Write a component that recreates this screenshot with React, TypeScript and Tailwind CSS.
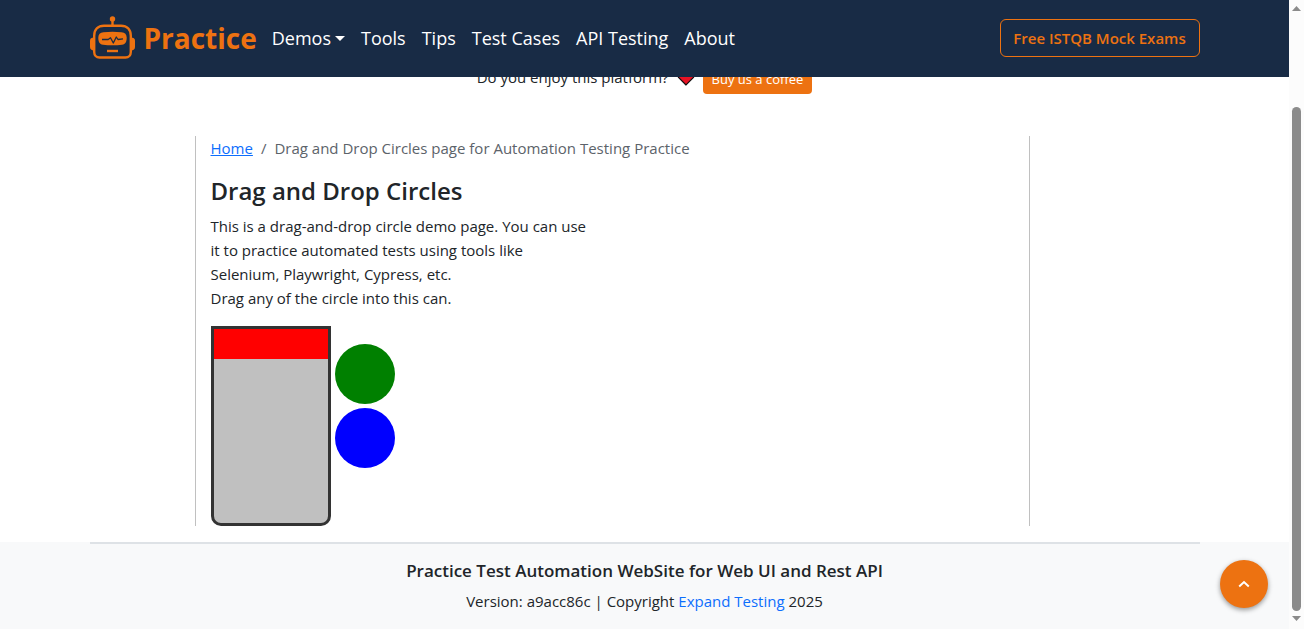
import React from "react";

const navLinks = ["Tools", "Tips", "Test Cases", "API Testing", "About"];

function RobotLogo() {
  return (
    <svg width="45" height="45" viewBox="0 0 45 45" fill="none" aria-hidden="true">
      <circle cx="22.5" cy="3" r="2.7" fill="#ed7211" />
      <path d="M22.5 4v6" stroke="#ed7211" strokeWidth="2.4" />
      <path
        d="M14 9.7H31c6 0 9.8 4 9.8 10V36c0 3-2 5.5-5.3 5.5H9.5C6.2 41.5 4.2 39 4.2 36V19.7c0-6 3.8-10 9.8-10Z"
        stroke="#ed7211"
        strokeWidth="2.4"
      />
      <path d="M4 21.5v13C1.5 34.5 0 33 0 31v-6.5c0-2 1.5-3 4-3Z" fill="#ed7211" />
      <path d="M41 21.5v13c2.5 0 4-1.500 4-3.500v-6.500c0-2-1.500-3-4-3Z" fill="#ed7211" />
      <path
        d="M13.5 16.200c6-.7 12-.7 18 0 3.500.4 5.200 2 5.200 5.300 0 4-1 6.700-4.700 7.200-6 .7-13 .7-19 0-3.700-.5-4.700-3.200-4.700-7.200 0-3.300 1.700-4.900 5.200-5.300Z"
        fill="#ed7211"
      />
      <path
        d="M12 23.500h6.200l2.300-1.700 2.800 5.200 3-6 1.700 2.500 5-.7"
        stroke="#182b45"
        strokeWidth="1.3"
        strokeLinejoin="round"
      />
      <path d="M17 35h11" stroke="#ed7211" strokeWidth="2.4" />
    </svg>
  );
}

function Header() {
  return (
    <header className="relative z-10 h-[77px] shrink-0 bg-[#182b45] pb-px">
      <div className="mx-auto flex h-full max-w-[1110px] items-center">
        <a href="#" className="mr-[15px] flex items-center gap-[9px] text-[28px] leading-10 font-bold text-[#ed7211]">
          <RobotLogo />
          Practice
        </a>
        <nav className="flex items-center gap-4 text-[18px] leading-7 text-white">
          <button type="button" className="flex items-center gap-1">
            Demos
            <svg width="10" height="5" viewBox="0 0 10 5" fill="currentColor" aria-hidden="true">
              <path d="M0 0h10L5 5Z" />
            </svg>
          </button>
          {navLinks.map((label) => (
            <a key={label} href="#">
              {label}
            </a>
          ))}
        </nav>
        <a
          href="#"
          className="ml-auto flex h-[38px] w-[200px] items-center justify-center rounded-md border border-[#ed7211] text-[15px] font-semibold whitespace-nowrap text-[#ed7211]"
        >
          Free ISTQB Mock Exams
        </a>
      </div>
    </header>
  );
}

function Heart() {
  return (
    <svg width="18" height="16" viewBox="0 0 18 16" aria-hidden="true">
      <path
        d="M9 15 1.5 7.5C-.5 4 2 1 5 1c2 0 3.300 1 4 2.500C9.700 2 11 1 13 1c3 0 5.500 3 3.500 6.500Z"
        fill="#e81224"
        stroke="#111"
        strokeWidth="1.2"
      />
    </svg>
  );
}

function Demo() {
  return (
    <section className="flex items-start gap-1">
      <div className="h-[200px] w-[120px] overflow-hidden rounded-b-[10px] border-3 border-[#333333] bg-[#c0c0c0]">
        <div className="h-[30px] bg-[#ff0000]" />
      </div>
      <div className="flex flex-col gap-1 pt-[18px]">
        <div draggable className="size-[60px] rounded-full bg-[#008000]" />
        <div draggable className="size-[60px] rounded-full bg-[#0000ff]" />
      </div>
    </section>
  );
}

function Scrollbar() {
  return (
    <div aria-hidden="true" className="flex w-[15px] shrink-0 flex-col items-center bg-[#fcfcfc] pt-[6px] pb-2">
      <svg width="9" height="5" viewBox="0 0 9 5" fill="#8b8b8b">
        <path d="M0 5h9L4.5 0Z" />
      </svg>
      <div className="mt-24 mb-[5px] w-[9px] grow rounded-full bg-[#8b8b8b]" />
      <svg width="9" height="5" viewBox="0 0 9 5" fill="#8b8b8b">
        <path d="M0 0h9L4.5 5Z" />
      </svg>
    </div>
  );
}

export default function App() {
  return (
    <div className="flex h-screen overflow-hidden bg-white font-['Open_Sans','Noto_Sans',sans-serif] text-[15px] leading-6 text-[#212529]">
      <div className="relative flex min-w-0 grow flex-col">
        <Header />
        <div className="-mt-[14px] flex h-[31px] shrink-0 items-start justify-center leading-7">
          <span>Do you enjoy this platform?</span>
          <span className="mx-2 pt-[7px]">
            <Heart />
          </span>
          <a href="#" className="flex h-[31px] items-center rounded bg-[#ed7211] px-[9px] text-[13px] text-white">
            Buy us a coffee
          </a>
        </div>
        <div className="mx-auto mt-[42px] w-full max-w-[1110px] shrink-0 px-[105px]">
          <main className="w-full max-w-[835px] border-x border-[#c0c0c0] px-[15px]">
            <nav aria-label="Breadcrumb" className="mb-4 flex gap-2 text-[#5c636a]">
              <a href="#" className="text-[#0d6efd] underline">
                Home
              </a>
              <span>/</span>
              <span>Drag and Drop Circles page for Automation Testing Practice</span>
            </nav>
            <h1 className="mb-2 text-[24px] leading-[30px] font-semibold">Drag and Drop Circles</h1>
            <p className="max-w-[384px]">
              This is a drag-and-drop circle demo page. You can use it to practice automated tests using tools like
              Selenium, Playwright, Cypress, etc.
            </p>
            <p className="mb-4">Drag any of the circle into this can.</p>
            <Demo />
          </main>
        </div>
        <footer className="mt-4 grow bg-[#f8f9fa] text-center">
          <div className="mx-auto max-w-[1110px] border-t-2 border-[#dee2e6] pt-[15px]">
            <h2 className="mb-1.5 text-[17px] leading-6 font-semibold">
              Practice Test Automation WebSite for Web UI and Rest API
            </h2>
            <p>
              Version: a9acc86c | Copyright{" "}
              <a href="#" className="text-[#0d6efd]">
                Expand Testing
              </a>{" "}
              2025
            </p>
          </div>
        </footer>
        <button
          type="button"
          aria-label="Back to top"
          className="absolute right-[21px] bottom-[21px] flex size-12 items-center justify-center rounded-full bg-[#ed7211] shadow-[0_2px_5px_rgba(0,0,0,0.4)]"
        >
          <svg width="12" height="8" viewBox="0 0 12 8" fill="none" aria-hidden="true">
            <path d="M1.2 6.5 6 2l4.8 4.5" stroke="white" strokeWidth="2" />
          </svg>
        </button>
      </div>
      <Scrollbar />
    </div>
  );
}
